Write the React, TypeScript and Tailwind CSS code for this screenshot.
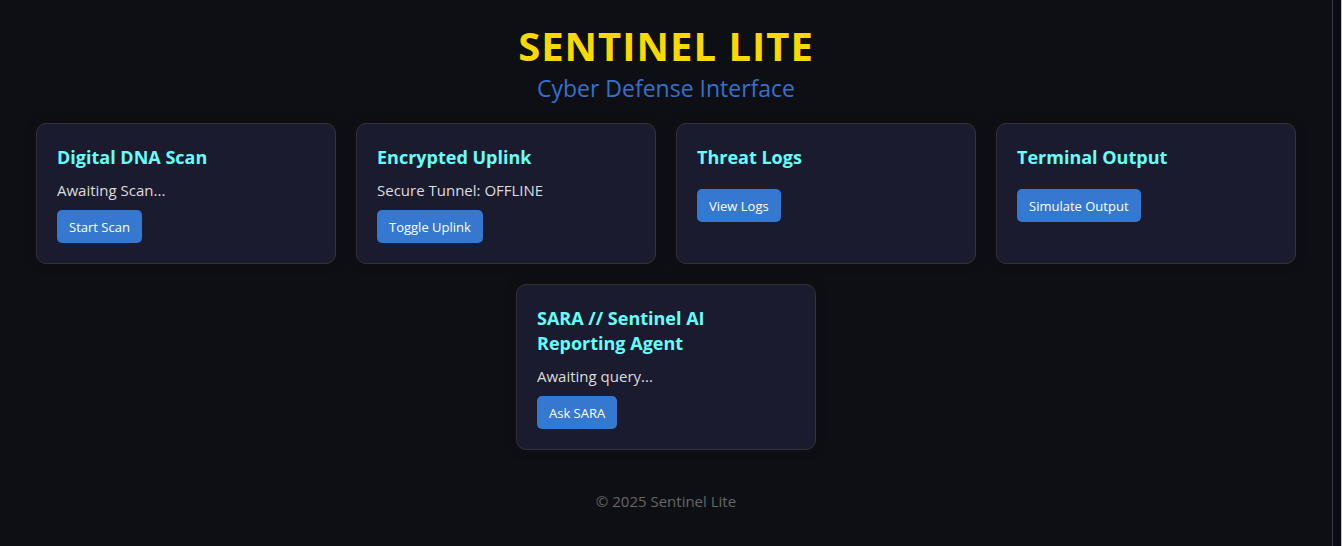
type Panel = {
  title: string;
  status?: string;
  action: string;
};

const panels: Panel[] = [
  { title: "Digital DNA Scan", status: "Awaiting Scan...", action: "Start Scan" },
  { title: "Encrypted Uplink", status: "Secure Tunnel: OFFLINE", action: "Toggle Uplink" },
  { title: "Threat Logs", action: "View Logs" },
  { title: "Terminal Output", action: "Simulate Output" },
  { title: "SARA // Sentinel AI Reporting Agent", status: "Awaiting query...", action: "Ask SARA" },
];

function PanelCard({ title, status, action }: Panel) {
  return (
    <section className="w-[300px] rounded-[10px] border border-[#333333] bg-[#1b1b2f] px-5 pt-[21px] pb-5 shadow-[0_0_10px_rgba(20,15,15,0.5)]">
      <h2 className="text-[18px] leading-[25px] font-bold text-[#66ffff]">{title}</h2>
      {status ? (
        <p className="mt-2 mb-2 text-[15px] leading-6 text-[#dddddd]">{status}</p>
      ) : (
        <div className="h-[19px]" />
      )}
      <button
        type="button"
        className="block rounded-[5px] bg-[#3478d0] px-3 pt-[9px] pb-[7px] text-[13px] leading-[17px] text-white"
      >
        {action}
      </button>
    </section>
  );
}

export default function App() {
  return (
    <div className="flex min-h-screen bg-[#0e0f14] font-['Open_Sans','Noto_Sans',sans-serif]">
      <div className="flex-1">
        <header className="pt-[19px] text-center">
          <h1 className="text-[40px] leading-[54px] font-bold tracking-[1px] text-[#fad800]">SENTINEL LITE</h1>
          <p className="text-[23px] leading-[30px] text-[#3272cc]">Cyber Defense Interface</p>
        </header>
        <main className="mt-5 flex flex-wrap justify-center gap-5 px-5">
          {panels.map((panel) => (
            <PanelCard key={panel.title} {...panel} />
          ))}
        </main>
        <footer className="mt-[39px] pb-8 text-center text-[15px] leading-6 text-[#666666]">© 2025 Sentinel Lite</footer>
      </div>
      <div className="w-[10px] border-r border-l border-r-[#c4c4c8] border-l-[#3b3b3f] bg-[#0b0b16]" />
    </div>
  );
}
